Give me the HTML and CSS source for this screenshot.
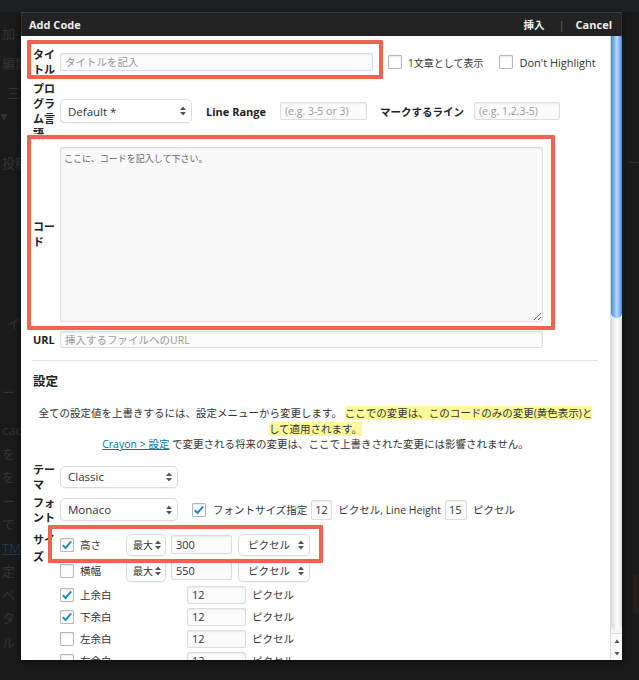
FILE: index.html
```html
<!DOCTYPE html>
<html lang="ja">
<head>
<meta charset="utf-8">
<title>Add Code</title>
<link rel="stylesheet" href="styles.css">
</head>
<body>
<div class="page">
  <div class="topstrip"></div>
  <div class="under">
    <div class="bg-left">
      <div class="bgl m1">加</div>
      <div class="bgl m2">編集</div>
      <div class="bgl m2 ind">三</div>
      <div class="bgl m3 tri">▼</div>
      <div class="bgl m4">投稿</div>
      <div class="bgl m5 ind">イ</div>
      <div class="bgl m6">ー</div>
      <div class="bgl m7">cad</div>
      <div class="bgl m8">を</div>
      <div class="bgl m8">を</div>
      <div class="bgl m8">ー</div>
      <div class="bgl m8">で</div>
      <div class="bgl m8 link">TMI</div>
      <div class="bgl m8">定</div>
      <div class="bgl m8">ベ</div>
      <div class="bgl m8">タ</div>
      <div class="bgl m8">ル</div>
    </div>
    <div class="bg-right">
      <div class="bgr-dash">ー</div>
      <div class="bgr-box"></div>
    </div>
  </div>
</div>

<div class="dialog">
  <div class="dlg-head">
    <span class="dlg-title">Add Code</span>
    <span class="dlg-actions"><span class="ins">挿入</span><span class="sep">|</span><span>Cancel</span></span>
  </div>
  <div class="dlg-body">
    <div class="content">
      <div class="row r-title">
        <div class="lbl">タイトル</div>
        <input class="inp w-title" type="text" placeholder="タイトルを記入">
        <span class="cb cb-first"></span><span class="cbtext">1文章として表示</span>
        <span class="cb cb-second"></span><span class="cbtext en">Don't Highlight</span>
      </div>
      <div class="row r-lang">
        <div class="lbl">プログラム言語</div>
        <div class="sel w-lang"><span>Default *</span><svg class="arrows" width="6" height="10" viewBox="0 0 6 10"><path d="M0 4 L3 0.5 L6 4Z M0 6 L3 9.5 L6 6Z" fill="#555"/></svg></div>
        <span class="blbl ml-range">Line Range</span>
        <input class="inp small w-range" type="text" placeholder="(e.g. 3-5 or 3)">
        <span class="blbl ml-mark">マークするライン</span>
        <input class="inp small w-mark" type="text" placeholder="(e.g. 1,2,3-5)">
      </div>
      <div class="row r-code">
        <div class="lbl">コード</div>
        <textarea class="code" placeholder="ここに、コードを記入して下さい。"></textarea>
      </div>
      <div class="row r-url">
        <div class="lbl">URL</div>
        <input class="inp url" type="text" placeholder="挿入するファイルへのURL">
      </div>
      <div class="hr"></div>
      <div class="heading">設定</div>
      <p class="note">全ての設定値を上書きするには、設定メニューから変更します。 <span class="hl">ここでの変更は、このコードのみの変更(黄色表示)と<br>して適用されます。</span><br><a class="lnk">Crayon &gt; 設定</a> で変更される将来の変更は、ここで上書きされた変更には影響されません。</p>

      <div class="row r-theme">
        <div class="lbl">テーマ</div>
        <div class="sel w-theme"><span>Classic</span><svg class="arrows" width="6" height="10" viewBox="0 0 6 10"><path d="M0 4 L3 0.5 L6 4Z M0 6 L3 9.5 L6 6Z" fill="#555"/></svg></div>
      </div>
      <div class="row r-font">
        <div class="lbl">フォント</div>
        <div class="sel w-font"><span>Monaco</span><svg class="arrows" width="6" height="10" viewBox="0 0 6 10"><path d="M0 4 L3 0.5 L6 4Z M0 6 L3 9.5 L6 6Z" fill="#555"/></svg></div>
        <span class="cb checked ml-fcb"><svg width="14" height="14" viewBox="0 0 14 14"><path d="M2.8 7.2 L5.6 10 L11.2 3.4" fill="none" stroke="#1e8cbe" stroke-width="2"/></svg></span>
        <span class="txt ml-ftxt">フォントサイズ指定</span>
        <input class="inp num ml-num" type="text" value="12">
        <span class="txt ml-t">ピクセル, Line Height</span>
        <input class="inp num2 ml-num" type="text" value="15">
        <span class="txt ml-t">ピクセル</span>
      </div>
      <div class="row r-size">
        <div class="lbl">サイズ</div>
        <div class="sizes">
          <div class="srow tall">
            <span class="cb checked"><svg width="14" height="14" viewBox="0 0 14 14"><path d="M2.8 7.2 L5.6 10 L11.2 3.4" fill="none" stroke="#1e8cbe" stroke-width="2"/></svg></span>
            <span class="slbl">高さ</span>
            <div class="sel w-max"><span>最大</span><svg class="arrows" width="6" height="10" viewBox="0 0 6 10"><path d="M0 4 L3 0.5 L6 4Z M0 6 L3 9.5 L6 6Z" fill="#555"/></svg></div>
            <input class="inp sval" type="text" value="300">
            <div class="sel w-unit"><span>ピクセル</span><svg class="arrows" width="6" height="10" viewBox="0 0 6 10"><path d="M0 4 L3 0.5 L6 4Z M0 6 L3 9.5 L6 6Z" fill="#555"/></svg></div>
          </div>
          <div class="srow tall">
            <span class="cb"></span>
            <span class="slbl">横幅</span>
            <div class="sel w-max"><span>最大</span><svg class="arrows" width="6" height="10" viewBox="0 0 6 10"><path d="M0 4 L3 0.5 L6 4Z M0 6 L3 9.5 L6 6Z" fill="#555"/></svg></div>
            <input class="inp sval" type="text" value="550">
            <div class="sel w-unit"><span>ピクセル</span><svg class="arrows" width="6" height="10" viewBox="0 0 6 10"><path d="M0 4 L3 0.5 L6 4Z M0 6 L3 9.5 L6 6Z" fill="#555"/></svg></div>
          </div>
          <div class="srow">
            <span class="cb checked"><svg width="14" height="14" viewBox="0 0 14 14"><path d="M2.8 7.2 L5.6 10 L11.2 3.4" fill="none" stroke="#1e8cbe" stroke-width="2"/></svg></span>
            <span class="slbl">上余白</span>
            <input class="inp mval" type="text" value="12">
            <span class="txt ml-t">ピクセル</span>
          </div>
          <div class="srow">
            <span class="cb checked"><svg width="14" height="14" viewBox="0 0 14 14"><path d="M2.8 7.2 L5.6 10 L11.2 3.4" fill="none" stroke="#1e8cbe" stroke-width="2"/></svg></span>
            <span class="slbl">下余白</span>
            <input class="inp mval" type="text" value="12">
            <span class="txt ml-t">ピクセル</span>
          </div>
          <div class="srow">
            <span class="cb"></span>
            <span class="slbl">左余白</span>
            <input class="inp mval" type="text" value="12">
            <span class="txt ml-t">ピクセル</span>
          </div>
          <div class="srow">
            <span class="cb"></span>
            <span class="slbl">右余白</span>
            <input class="inp mval" type="text" value="12">
            <span class="txt ml-t">ピクセル</span>
          </div>
        </div>
      </div>

      <div class="mark mark-title"></div>
      <div class="mark mark-code"></div>
      <div class="mark mark-size"></div>
    </div>
    <div class="scrollbar">
      <div class="thumb"></div>
      <div class="track"></div>
      <div class="sb-arrows">
        <svg width="12" height="12" viewBox="0 0 12 12"><path d="M3.5 8 L6 4.5 L8.5 8Z" fill="#555"/></svg>
        <svg width="12" height="12" viewBox="0 0 12 12"><path d="M3.5 4 L6 7.5 L8.5 4Z" fill="#555"/></svg>
      </div>
    </div>
  </div>
</div>
</body>
</html>
```

FILE: styles.css
```css
* { box-sizing: border-box; }
html, body { margin: 0; padding: 0; }
body {
  width: 639px;
  height: 680px;
  overflow: hidden;
  position: relative;
  background: #1b1b1b;
  font-family: "Open Sans", "Noto Sans CJK JP", sans-serif;
  color: #333;
}

/* underlying (dimmed) page */
.page { width: 639px; height: 680px; }
.topstrip { height: 12px; background: #1d2126; }
.under { display: flex; justify-content: space-between; height: 668px; }
.bg-left { width: 30px; overflow: hidden; }
.bgl {
  height: 20px;
  line-height: 20px;
  font-size: 13px;
  color: #333;
  white-space: nowrap;
  padding-left: 2px;
}
.bgl.ind { padding-left: 7px; }
.bgl.tri { font-size: 8px; padding-left: 0; }
.m1 { margin-top: 11px; }
.m2 { margin-top: 10px; }
.m3 { margin-top: 4px; }
.m4 { margin-top: 26px; }
.m5 { margin-top: 140px; }
.m6 { margin-top: 49px; }
.m7 { margin-top: 18px; }
.m8 { margin-top: 3.5px; }
.bgl.link { color: #22384f; text-decoration: underline; }
.bg-right { width: 17px; padding-top: 142px; }
.bgr-dash { font-size: 12px; color: #303030; padding-left: 6px; height: 421px; }
.bgr-box { width: 6px; height: 38px; margin-left: 11px; background: #25211a; }

/* dialog */
.dialog {
  position: absolute;
  left: 21px;
  top: 12px;
  width: 601px;
  height: 648px;
  display: flex;
  flex-direction: column;
  background: #fff;
  box-shadow: 0 2px 8px rgba(0,0,0,0.6);
}
.dlg-head {
  height: 24px;
  flex: none;
  background: #232323;
  border-top: 1px solid #3d3d3d;
  border-left: 1px solid #333;
  border-right: 1px solid #333;
  display: flex;
  align-items: center;
  justify-content: space-between;
  padding: 0 9px 0 7px;
  color: #eee;
  font-weight: 700;
  font-size: 11px;
}
.dlg-actions { display: flex; align-items: center; }
.ins { font-size: 10.5px; }
.sep { color: #666; font-weight: 400; margin: 0 11px 0 14px; }
.dlg-body { flex: 1; display: flex; overflow: hidden; }

.content {
  flex: 1;
  position: relative;
  overflow: hidden;
  padding: 7px 12px 0 12px;
  font-size: 10.5px;
}

.row { display: flex; align-items: center; }
.lbl {
  width: 24px;
  margin-right: 3px;
  flex: none;
  font-size: 11px;
  font-weight: 700;
  line-height: 15px;
  color: #222;
}
.r-title { height: 38px; }
.r-lang { height: 60px; }
.r-code { height: 186px; }
.r-url { height: 25px; }
.r-theme { height: 30px; margin-top: 9px; }
.r-font { height: 30px; margin-top: 3px; }
.r-size { align-items: flex-start; margin-top: 5px; }
.r-size .lbl { line-height: 17px; padding-top: 1px; }

.inp {
  height: 18px;
  border: 1px solid #ddd;
  border-radius: 2px;
  background: #fbfbfb;
  box-shadow: inset 0 1px 2px rgba(0,0,0,0.07);
  font-family: "Open Sans", "Noto Sans CJK JP", sans-serif;
  font-size: 11px;
  color: #333;
  padding: 0 4px;
  outline: none;
  margin: 0;
  flex: none;
}
.inp::placeholder { color: #9a9a9a; }
.w-title { width: 313px; font-size: 10.5px; }
.small { height: 18px; font-size: 10.5px; }
.w-range { width: 87px; margin-left: 14px; }
.w-mark { width: 86px; margin-left: 10px; }
.url { width: 483px; height: 17px; font-size: 10.5px; }

.cb {
  width: 14px;
  height: 14px;
  flex: none;
  border: 1px solid #b4b9be;
  border-radius: 1px;
  background: #fff;
  box-shadow: inset 0 1px 2px rgba(0,0,0,0.1);
  display: inline-flex;
  align-items: center;
  justify-content: center;
  position: relative;
}
.cb svg { position: absolute; left: -1px; top: -1px; }
.cb-first { margin-left: 15px; }
.cb-second { margin-left: 16px; }
.cbtext { margin-left: 6px; font-size: 10px; color: #333; white-space: nowrap; }
.cbtext.en { font-size: 11px; }

.sel {
  height: 24px;
  flex: none;
  border: 1px solid #ddd;
  border-radius: 5px;
  background: #fff;
  box-shadow: 0 1px 1px rgba(0,0,0,0.05);
  display: flex;
  align-items: center;
  justify-content: space-between;
  padding: 0 5px 0 7px;
  font-size: 11.5px;
  color: #333;
  white-space: nowrap;
}
.w-lang { width: 132px; }
.w-theme { width: 118px; height: 22px; }
.w-font { width: 118px; height: 23px; }
.w-max { width: 40px; height: 22px; padding: 0 4px 0 6px; font-size: 10px; }
.w-unit { width: 72px; height: 22px; padding: 0 5px 0 9px; font-size: 10.5px; }

.blbl { font-weight: 700; font-size: 11px; color: #222; white-space: nowrap; }
.ml-range { margin-left: 14px; }
.ml-mark { margin-left: 13px; font-size: 10.5px; }

.code {
  width: 483px;
  height: 175px;
  flex: none;
  border: 1px solid #ddd;
  border-radius: 2px;
  background: #f9f9f9;
  box-shadow: inset 0 1px 2px rgba(0,0,0,0.07);
  font-family: "Noto Sans CJK JP", sans-serif;
  font-size: 9px;
  padding: 4px 3px;
  margin: 0;
  outline: none;
  color: #333;
}
.code::placeholder { color: #666; }

.hr { height: 1px; background: #e3e3e3; width: 566px; margin: 8px 0 0 -1px; }
.heading { margin-top: 13px; font-size: 12.5px; font-weight: 700; line-height: 16px; color: #222; }
.note {
  margin: 16px 0 0 0;
  text-align: center;
  font-size: 10.5px;
  line-height: 15.5px;
  color: #333;
}
.hl { background: #fcf99d; }
.lnk { color: #0074a2; text-decoration: underline; }

.txt { font-size: 10.5px; color: #333; white-space: nowrap; }
.ml-fcb { margin-left: 14px; }
.ml-ftxt { margin-left: 7px; }
.ml-num { margin-left: 4px; }
.ml-t { margin-left: 6px; }
.num { width: 21px; height: 20px; padding: 0 3px; }
.num2 { width: 22px; height: 20px; padding: 0 3px; }

.sizes { display: flex; flex-direction: column; padding-top: 2px; }
.srow { display: flex; align-items: center; height: 22px; }
.srow.tall { height: 26px; }
.slbl { width: 46px; margin-left: 6px; font-size: 10.5px; color: #333; flex: none; }
.sval { width: 61px; height: 19px; margin-left: 5px; }
.w-unit { margin-left: 6px; }
.mval { width: 59px; height: 18px; margin-left: 61px; }

/* annotation boxes drawn over the form */
.mark {
  position: absolute;
  border: 4px solid #ef6351;
  border-radius: 1px;
  pointer-events: none;
}
.mark-title { left: 6px; top: 4px; width: 356px; height: 39px; }
.mark-code { left: 6px; top: 99px; width: 528px; height: 195px; }
.mark-size { left: 27px; top: 489px; width: 275px; height: 38px; }

/* scrollbar */
.scrollbar {
  width: 12px;
  flex: none;
  display: flex;
  flex-direction: column;
  background: #f3f3f3;
  border-left: 1px solid #dcdcdc;
}
.thumb {
  height: 282px;
  flex: none;
  border-radius: 0 0 6px 6px;
  background: linear-gradient(to right, #3f84df, #8fbff7 35%, #b9dafd 55%, #6aa6ee 85%, #3a7fd8);
}
.track {
  flex: 1;
  margin-bottom: 3px;
  border-radius: 0 0 6px 6px;
  background: linear-gradient(to right, #d8d8d8, #f7f7f7 45%, #fdfdfd 60%, #dedede);
}
.sb-arrows {
  height: 27px;
  flex: none;
  display: flex;
  flex-direction: column;
  align-items: center;
  background: #fafafa;
  border-top: 1px solid #ddd;
}
.sb-arrows svg { display: block; margin-top: 1px; }
```
